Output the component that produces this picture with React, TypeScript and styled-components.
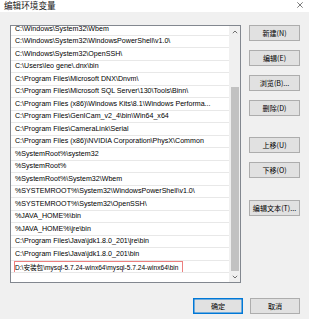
import React, { FC } from "react";
import styled, { createGlobalStyle } from "styled-components";

const GlobalStyle = createGlobalStyle`
  html, body {
    margin: 0;
    padding: 0;
    background: #f0f0f0;
  }
  body {
    font-family: "Liberation Sans", "Noto Sans CJK SC", sans-serif;
  }
`;

const Window = styled.div`
  width: 309px;
  height: 319px;
  display: flex;
  flex-direction: column;
  background: #f0f0f0;
  overflow: hidden;
`;

const TitleBar = styled.div`
  height: 12px;
  flex-shrink: 0;
  display: flex;
  align-items: center;
  justify-content: space-between;
  padding: 0 6px 2px 4px;
  box-sizing: border-box;
  background: #ffffff;
`;

const Title = styled.span`
  font-family: "Noto Sans CJK SC", sans-serif;
  font-size: 8.6px;
  line-height: 1;
  color: #1a1a1a;
`;

const Body = styled.div`
  display: flex;
  gap: 8px;
  padding: 13px 9px 0 10px;
`;

const ListBox = styled.div`
  width: 231px;
  height: 258px;
  flex-shrink: 0;
  box-sizing: border-box;
  display: flex;
  border: 1px solid #82878f;
  background: #ffffff;
`;

const Rows = styled.div`
  flex: 1;
  overflow: hidden;
`;

const RowsInner = styled.div`
  margin-top: -2.8px;
`;

const Row = styled.div<{ $marked?: boolean }>`
  height: 12.5px;
  box-sizing: border-box;
  display: flex;
  align-items: ${(p) => (p.$marked ? "stretch" : "center")};
  padding-left: ${(p) => (p.$marked ? 3 : 4)}px;
  border-bottom: 1px solid #e8e8e8;
  font-size: ${(p) => (p.$marked ? 6.6 : 7.1)}px;
  color: #000000;
  white-space: nowrap;
  overflow: hidden;
`;

const Marked = styled.span`
  display: flex;
  align-items: center;
  box-sizing: border-box;
  height: calc(100% + 1px);
  margin-bottom: -1px;
  padding: 0 4px 0 0;
  border: 1px solid #ec7f7f;
`;

const ScrollBar = styled.div`
  width: 11px;
  display: flex;
  flex-direction: column;
  background: #f0f0f0;
`;

const ScrollArrow = styled.div`
  height: 11px;
  display: flex;
  align-items: center;
  justify-content: center;
`;

const Track = styled.div`
  flex: 1;
  display: flex;
  flex-direction: column;
  justify-content: flex-end;
`;

const Thumb = styled.div`
  margin: 0 1.5px;
  background: #c2c2c2;
`;

const SideButtons = styled.div`
  display: flex;
  flex-direction: column;
  gap: 9px;
`;

const Button = styled.button<{ $gapBefore?: number; $primary?: boolean }>`
  width: ${(p) => (p.$primary !== undefined ? 50 : 51)}px;
  height: 16px;
  margin: ${(p) => p.$gapBefore ?? 0}px 0 0 0;
  padding: 0;
  box-sizing: border-box;
  border: 1px solid ${(p) => (p.$primary ? "#0078d7" : "#adadad")};
  box-shadow: ${(p) => (p.$primary ? "inset 0 0 0 0.5px #0078d7" : "none")};
  background: #e1e1e1;
  font-family: "Noto Sans CJK SC", sans-serif;
  font-size: 7.1px;
  color: #000000;
  white-space: nowrap;
`;

const Footer = styled.div`
  display: flex;
  justify-content: flex-end;
  gap: 7px;
  padding: 15px 9px 0 0;
`;

const ENTRIES = [
  "C:\\Windows\\System32\\Wbem",
  "C:\\Windows\\System32\\WindowsPowerShell\\v1.0\\",
  "C:\\Windows\\System32\\OpenSSH\\",
  "C:\\Users\\leo gene\\.dnx\\bin",
  "C:\\Program Files\\Microsoft DNX\\Dnvm\\",
  "C:\\Program Files\\Microsoft SQL Server\\130\\Tools\\Binn\\",
  "C:\\Program Files (x86)\\Windows Kits\\8.1\\Windows Performa...",
  "C:\\Program Files\\GenICam_v2_4\\bin\\Win64_x64",
  "C:\\Program Files\\CameraLink\\Serial",
  "C:\\Program Files (x86)\\NVIDIA Corporation\\PhysX\\Common",
  "%SystemRoot%\\system32",
  "%SystemRoot%",
  "%SystemRoot%\\System32\\Wbem",
  "%SYSTEMROOT%\\System32\\WindowsPowerShell\\v1.0\\",
  "%SYSTEMROOT%\\System32\\OpenSSH\\",
  "%JAVA_HOME%\\bin",
  "%JAVA_HOME%\\jre\\bin",
  "C:\\Program Files\\Java\\jdk1.8.0_201\\jre\\bin",
  "C:\\Program Files\\Java\\jdk1.8.0_201\\bin",
  "D:\\安装包\\mysql-5.7.24-winx64\\mysql-5.7.24-winx64\\bin",
];

const MARKED_INDEX = ENTRIES.length - 1;
// list is scrolled to the bottom, thumb covers this share of the track
const VISIBLE_SHARE = 0.786;

const Chevron: FC<{ up?: boolean }> = ({ up }) => (
  <svg width="6" height="4" viewBox="0 0 6 4">
    <path
      d={up ? "M0.8 3.2 L3 1 L5.2 3.2" : "M0.8 0.8 L3 3 L5.2 0.8"}
      fill="none"
      stroke="#606060"
      strokeWidth="0.9"
    />
  </svg>
);

const CloseIcon: FC = () => (
  <svg width="6" height="6" viewBox="0 0 6 6">
    <path d="M0.3 0.3 L5.7 5.7 M5.7 0.3 L0.3 5.7" stroke="#444" strokeWidth="0.7" />
  </svg>
);

export default function App() {
  return (
    <>
      <GlobalStyle />
      <Window>
        <TitleBar>
          <Title>编辑环境变量</Title>
          <CloseIcon />
        </TitleBar>

        <Body>
          <ListBox>
            <Rows>
              <RowsInner>
                {ENTRIES.map((entry, i) =>
                  i === MARKED_INDEX ? (
                    <Row key={i} $marked>
                      <Marked>{entry}</Marked>
                    </Row>
                  ) : (
                    <Row key={i}>{entry}</Row>
                  )
                )}
              </RowsInner>
            </Rows>
            <ScrollBar>
              <ScrollArrow>
                <Chevron up />
              </ScrollArrow>
              <Track>
                <Thumb style={{ height: `${VISIBLE_SHARE * 100}%` }} />
              </Track>
              <ScrollArrow>
                <Chevron />
              </ScrollArrow>
            </ScrollBar>
          </ListBox>

          <SideButtons>
            <Button>新建(N)</Button>
            <Button>编辑(E)</Button>
            <Button>浏览(B)...</Button>
            <Button>删除(D)</Button>
            <Button $gapBefore={12}>上移(U)</Button>
            <Button>下移(O)</Button>
            <Button $gapBefore={13}>编辑文本(T)...</Button>
          </SideButtons>
        </Body>

        <Footer>
          <Button $primary>确定</Button>
          <Button $primary={false}>取消</Button>
        </Footer>
      </Window>
    </>
  );
}
